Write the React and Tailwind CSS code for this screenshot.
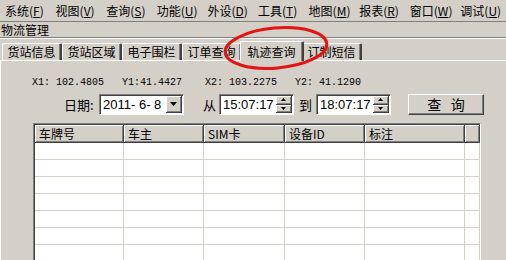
const menus = [
  ["系统", "F"],
  ["视图", "V"],
  ["查询", "S"],
  ["功能", "U"],
  ["外设", "D"],
  ["工具", "T"],
  ["地图", "M"],
  ["报表", "R"],
  ["窗口", "W"],
  ["调试", "U"],
];

const tabs = ["货站信息", "货站区域", "电子围栏", "订单查询", "轨迹查询", "订制短信"];
const cols = ["车牌号", "车主", "SIM卡", "设备ID", "标注", ""];

const cjk = { fontFamily: '"Noto Sans CJK SC", sans-serif' };

function Spinner() {
  return (
    <div className="flex flex-col w-[16px] h-[17px]">
      {["up", "down"].map((d) => (
        <div
          key={d}
          className="flex-1 flex items-center justify-center bg-[#d4d0c8] border-r border-b border-[#404040] shadow-[inset_1px_1px_#fff,inset_-1px_-1px_#808080]"
        >
          <svg width="5" height="3" viewBox="0 0 5 3">
            {d === "up" ? <path d="M2.5 0 L5 3 L0 3 Z" fill="#000" /> : <path d="M0 0 L5 0 L2.5 3 Z" fill="#000" />}
          </svg>
        </div>
      ))}
    </div>
  );
}

function TimeBox({ value }) {
  return (
    <div className="w-[75px] h-[21px] flex items-center bg-white border-t border-l border-[#808080] border-r border-b border-r-white border-b-white shadow-[inset_1px_1px_#404040]">
      <span className="flex-1 pl-[3px] text-[13px] text-black" style={{ fontFamily: '"Liberation Sans", sans-serif' }}>
        {value}
      </span>
      <div className="pr-[1px]">
        <Spinner />
      </div>
    </div>
  );
}

export default function App() {
  return (
    <div className="relative w-[506px] h-[260px] overflow-hidden bg-[#d4d0c8] text-black" style={cjk}>
      {/* menu bar */}
      <div className="h-[21px] flex items-center pl-[5px] text-[12px]">
        {menus.map(([name, key]) => (
          <div key={name + key} className="w-[50.6px] shrink-0 whitespace-nowrap">
            {name}(<span className="underline">{key}</span>)
          </div>
        ))}
      </div>

      {/* title row */}
      <div className="h-[17px] border-t border-[#808080] border-b flex items-center pl-[1px] text-[12px] leading-none">
        物流管理
      </div>
      <div className="h-[1px] bg-white" />

      {/* tabs */}
      <div className="flex items-end pl-[2px] mt-[2px] h-[19px]">
        {tabs.map((t, i) =>
          i === 4 ? (
            <div
              key={t}
              className="relative z-10 -mx-[2px] w-[64px] h-[20px] -mb-[1px] flex items-center justify-center text-[12px] bg-[#d4d0c8] border-t border-l border-white border-r-2 border-r-[#404040] shadow-[inset_-1px_0_#808080] rounded-t-[2px]"
            >
              {t}
            </div>
          ) : (
            <div
              key={t}
              className="w-[60px] h-[17px] flex items-center justify-center text-[12px] border-t border-l border-white border-r-2 border-r-[#404040] shadow-[inset_-1px_0_#808080] rounded-t-[2px]"
            >
              {t}
            </div>
          )
        )}
      </div>

      {/* panel */}
      <div className="border-t border-l border-white h-[202px] relative">
        <div
          className="flex pl-[31px] pt-[16px] text-[10px] leading-[12px] h-[30px]"
          style={{ fontFamily: '"Liberation Mono", monospace' }}
        >
          <span className="w-[90px]">X1: 102.4805</span>
          <span className="w-[83px]">Y1:41.4427</span>
          <span className="w-[90px]">X2: 103.2275</span>
          <span>Y2: 41.1290</span>
        </div>

        <div className="flex items-center h-[21px] mt-[3px] text-[13px]">
          <span className="ml-[63px] w-[35px]">日期:</span>
          <div className="w-[85px] h-[21px] flex items-center bg-white border-t border-l border-[#808080] border-r border-b border-r-white border-b-white shadow-[inset_1px_1px_#404040]">
            <span className="flex-1 pl-[3px]" style={{ fontFamily: '"Liberation Sans", sans-serif' }}>
              2011- 6- 8
            </span>
            <div className="mr-[1px] w-[16px] h-[17px] flex items-center justify-center bg-[#d4d0c8] border-r border-b border-[#404040] shadow-[inset_1px_1px_#fff,inset_-1px_-1px_#808080]">
              <svg width="7" height="4" viewBox="0 0 7 4">
                <path d="M0 0 L7 0 L3.5 4 Z" fill="#000" />
              </svg>
            </div>
          </div>
          <span className="ml-[19px] w-[16px]">从</span>
          <TimeBox value="15:07:17" />
          <span className="ml-[5px] w-[17px]">到</span>
          <TimeBox value="18:07:17" />
          <div className="ml-[17px] w-[76px] h-[21px] flex items-center justify-center text-[14px] bg-[#d4d0c8] border-t border-l border-white border-r border-b border-r-[#404040] border-b-[#404040] shadow-[inset_-1px_-1px_#808080]">
            查&nbsp;&nbsp;&nbsp;询
          </div>
        </div>

        {/* table */}
        <div className="ml-[32px] mt-[8px] w-[448px] h-[150px] overflow-hidden bg-white border-t border-l border-[#808080] border-r border-r-white shadow-[inset_1px_1px_#404040] pl-[1px] pt-[1px]">
          <div className="grid grid-cols-[89px_80px_81px_80px_100px_1fr]">
            {cols.map((c, i) => (
              <div
                key={i}
                className="h-[18px] flex items-center pl-[4px] text-[12px] leading-none bg-[#d4d0c8] border-r border-b border-[#404040] shadow-[inset_1px_1px_#fff,inset_-1px_-1px_#808080]"
              >
                {c}
              </div>
            ))}
            {Array.from({ length: 8 }).map((_, r) =>
              cols.map((c, i) => (
                <div key={r + "-" + i} className="h-[17px] border-r border-b border-[#d4d0c8]" />
              ))
            )}
          </div>
        </div>
      </div>

      {/* red annotation */}
      <svg className="absolute left-0 top-0 pointer-events-none" width="506" height="260">
        <ellipse
          cx="276"
          cy="48"
          rx="51"
          ry="20"
          fill="none"
          stroke="#e41414"
          strokeWidth="3"
          transform="rotate(-5 276 48)"
        />
      </svg>
    </div>
  );
}
